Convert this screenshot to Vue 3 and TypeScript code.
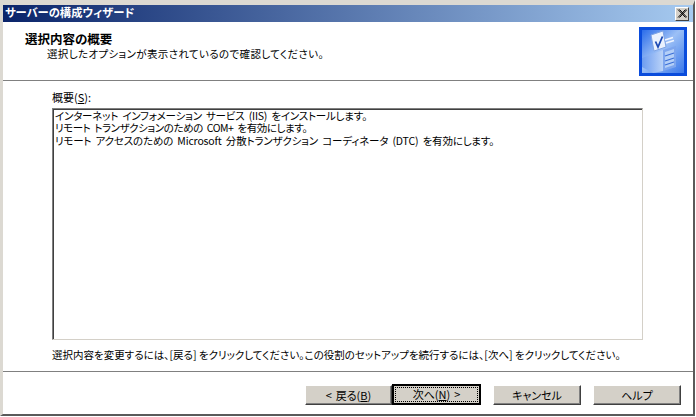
<script setup lang="ts">
const lines: string[] = [
  'インターネット インフォメーション サービス (IIS) をインストールします。',
  'リモート トランザクションのための COM+ を有効にします。',
  'リモート アクセスのための Microsoft 分散トランザクション コーディネータ (DTC) を有効にします。',
]
</script>

<template>
  <div class="window">
    <div class="titlebar">
      <span class="title">サーバーの構成ウィザード</span>
      <span class="close">
        <svg width="10" height="9" viewBox="0 0 10 9"><path d="M1 0.5 L8.5 8.5 M2.5 0.5 L10 8.5 M8.5 0.5 L1 8.5 M10 0.5 L2.5 8.5" stroke="#000" stroke-width="1" fill="none"/></svg>
      </span>
    </div>
    <header class="head">
      <div class="head-text">
        <div class="h1">選択内容の概要</div>
        <div class="h2">選択したオプションが表示されているので確認してください。</div>
      </div>
      <svg class="logo" width="48" height="49" viewBox="0 0 48 49">
        <defs>
          <linearGradient id="bg" x1="0" y1="0" x2="1" y2="1">
            <stop offset="0" stop-color="#2a6cea"/>
            <stop offset="0.45" stop-color="#9cc0f6"/>
            <stop offset="1" stop-color="#3a78ea"/>
          </linearGradient>
          <linearGradient id="side" x1="0" y1="0" x2="1" y2="0">
            <stop offset="0" stop-color="#6e9df0"/>
            <stop offset="1" stop-color="#b9d2f8"/>
          </linearGradient>
        </defs>
        <rect width="48" height="49" fill="#0a4cdc"/>
        <rect x="3" y="3" width="42" height="43" fill="url(#bg)"/>
        <path d="M3 31 L24 23 L24 44 L14 46 L3 40 Z" fill="url(#side)"/>
        <path d="M24 23 L37 19 L37 40 L24 44 Z" fill="#7ea6ee"/>
        <path d="M26 25 L35 22 L35 38 L26 41 Z" fill="#b4cff7"/>
        <path d="M26 29 L35 26 M26 34 L35 31 M26 38 L35 35" stroke="#3a6fd8" stroke-width="1.3"/>
        <path d="M12 8 L24 4 L27 20 L15 24 Z" fill="#eaf2fe" stroke="#7fa4e4" stroke-width="1"/>
        <path d="M16.5 14.5 L19 20 L23.5 9.5" stroke="#1d4bb4" stroke-width="1.8" fill="none"/>
        <path d="M26 13 L34 10.5 M27 16 L35 13.5" stroke="#f0f5ff" stroke-width="1.5"/>
      </svg>
    </header>
    <main class="body">
      <label class="label">概要(<u>S</u>):</label>
      <div class="box">
        <div v-for="line in lines" :key="line" class="line">{{ line }}</div>
      </div>
      <p class="hint">選択内容を変更するには、[戻る] をクリックしてください。この役割のセットアップを続行するには、[次へ] をクリックしてください。</p>
    </main>
    <footer class="foot">
      <div class="btn-group">
        <button class="btn back">&lt; 戻る(<u>B</u>)</button>
        <button class="btn default"><span class="focus">次へ(<u>N</u>) &gt;</span></button>
      </div>
      <button class="btn">キャンセル</button>
      <button class="btn">ヘルプ</button>
    </footer>
  </div>
</template>

<style>
html, body { margin: 0; background: #fff; }
</style>

<style scoped>
.window {
  width: 695px;
  height: 416px;
  box-sizing: border-box;
  display: flex;
  flex-direction: column;
  background: #fff;
  color: #000;
  overflow: hidden;
  border-style: solid;
  border-width: 5px 2px 2px 3px;
  border-color: #dcd9d2 #5a5a5a #5a5a5a #dcd9d2;
  font-family: "Noto Sans CJK JP", sans-serif;
  font-size: 10.5px;
  font-feature-settings: "palt";
}
.titlebar {
  height: 17px;
  flex: none;
  display: flex;
  align-items: center;
  justify-content: space-between;
  padding: 0 4px 0 2px;
  background: linear-gradient(90deg, #0a246a, #a6caf0);
}
.title { color: #fff; font-weight: 700; font-size: 11.3px; line-height: 15px; margin-bottom: 2px; }
.close {
  width: 14px;
  height: 14px;
  box-sizing: border-box;
  display: flex;
  align-items: center;
  justify-content: center;
  background: #d4d0c8;
  border: 1px solid;
  border-color: #fff #404040 #404040 #fff;
}
.head {
  height: 59px;
  flex: none;
  box-sizing: border-box;
  display: flex;
  justify-content: space-between;
  padding: 9px 6px 0 22px;
  border-bottom: 1px solid #808080;
}
.h1 { font-weight: 700; font-size: 12.5px; line-height: 15px; }
.h2 { margin-left: 22px; font-size: 10.5px; letter-spacing: 0.36px; line-height: 15px; }
.logo { flex: none; margin-top: -4px; }
.body {
  flex: 1;
  min-height: 0;
  display: flex;
  flex-direction: column;
  padding: 9px 50px 0 49px;
}
.label { line-height: 15px; height: 18px; font-size: 11px; }
.box {
  flex: 1;
  min-height: 0;
  box-sizing: border-box;
  border: 1px solid;
  border-color: #808080 #d4d0c8 #d4d0c8 #808080;
  box-shadow: inset 1px 1px 0 #404040;
  padding: 1px 2px;
}
.line { line-height: 12.4px; white-space: nowrap; word-spacing: 2px; letter-spacing: -0.2px; }
.line:nth-child(2) { letter-spacing: -0.42px; }
.line:nth-child(3) { letter-spacing: -0.16px; }
.hint { margin: 0; height: 31px; padding-top: 8px; box-sizing: border-box; line-height: 14px; white-space: nowrap; }
.foot {
  height: 43px;
  flex: none;
  box-sizing: border-box;
  display: flex;
  gap: 12px;
  justify-content: flex-end;
  padding: 13px 12px 0 0;
  border-top: 1px solid #808080;
}
.btn-group { display: flex; }
.btn {
  width: 88px;
  height: 20px;
  padding: 0;
  box-sizing: border-box;
  background: #d4d0c8;
  color: #000;
  font: inherit;
  font-size: 11px;
  word-spacing: 1.5px;
  border: 1px solid;
  border-color: #fff #404040 #404040 #fff;
  box-shadow: inset -1px -1px 0 #808080;
}
.btn.back { width: 87px; margin-right: 0; }
.btn.default { width: 89px; height: 21px; margin-top: -1px; border: 2px solid; border-color: #000; box-shadow: none; display: flex; padding: 1px; }
.focus { flex: 1; border: 1px dotted #000; line-height: 13px; text-align: center; }
</style>
